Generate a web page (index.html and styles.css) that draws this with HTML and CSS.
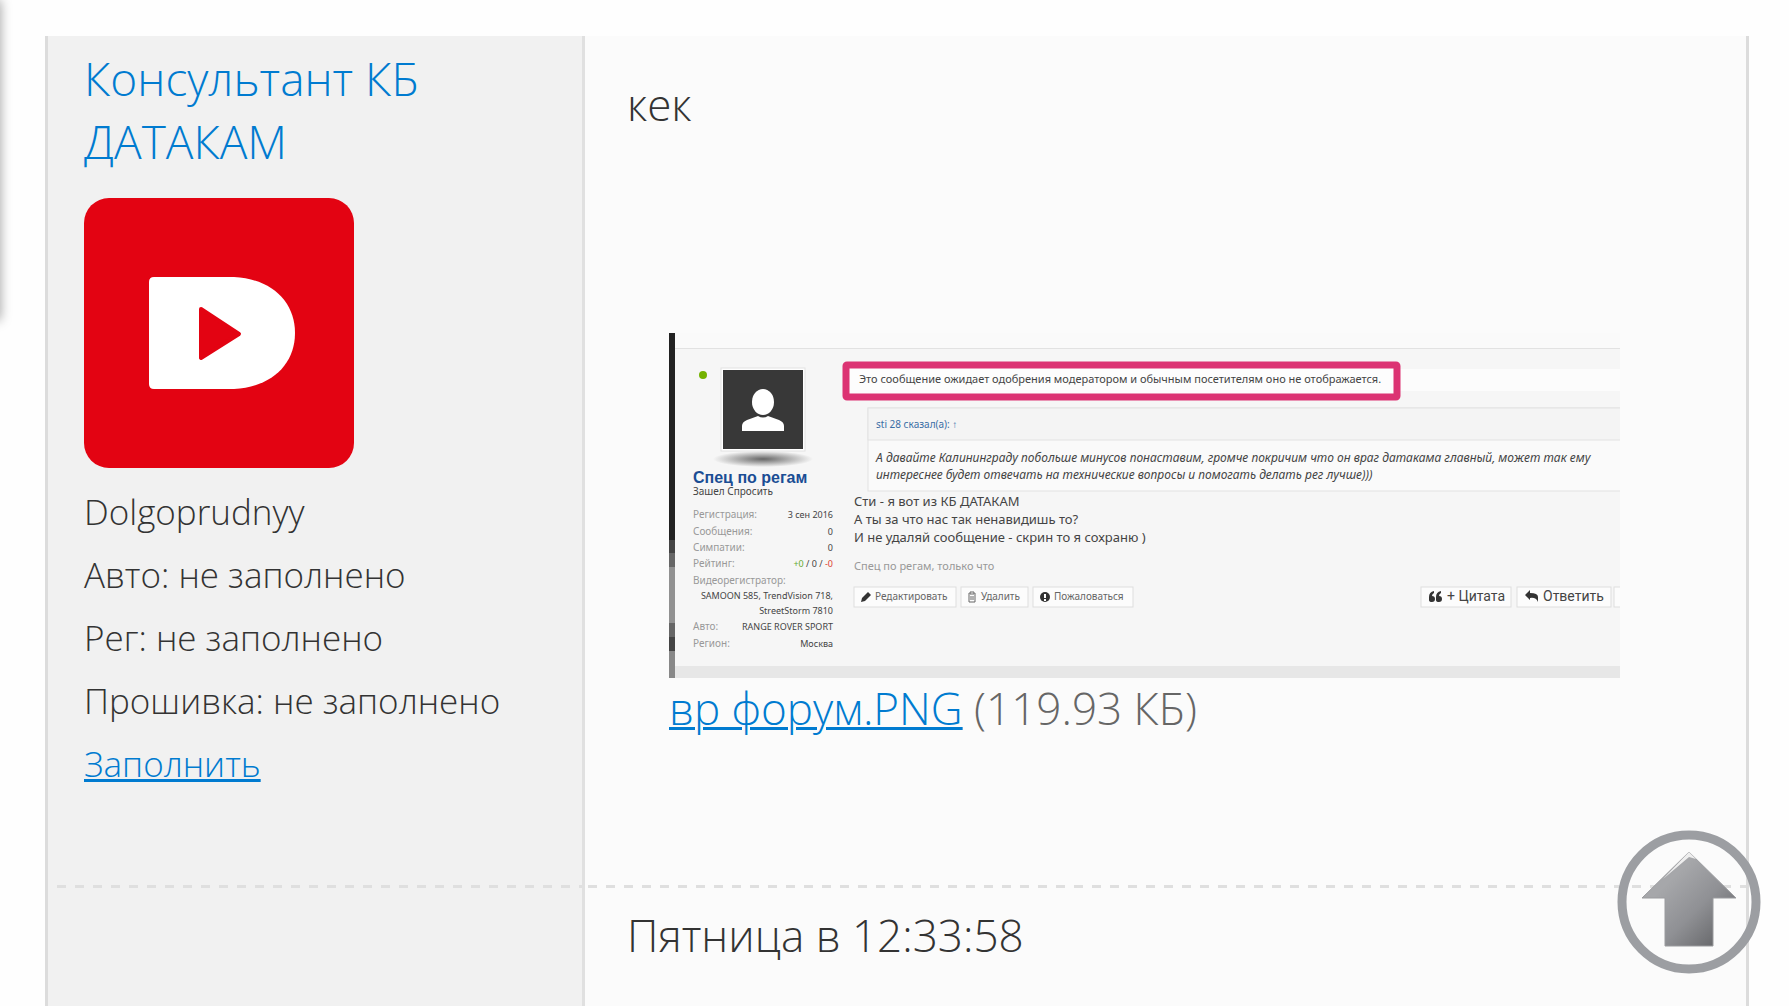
FILE: index.html
```html
<!DOCTYPE html>
<html lang="ru">
<head>
    <meta charset="UTF-8">
    <meta name="viewport" content="width=device-width, initial-scale=1.0">
    <title>Форум ДАТАКАМ</title>
    <link rel="stylesheet" href="styles.css">
</head>
<body>
    <div class="side-shadow"></div>

    <main class="post">
        <div class="post-row">
            <aside class="author">
                <a class="author-name" href="#">Консультант КБ ДАТАКАМ</a>
                <svg class="avatar" viewBox="0 0 270 270" role="img" aria-label="Аватар">
                    <rect width="270" height="270" rx="25" fill="#e30312"/>
                    <path d="M70 79H150C188 81 211 104 211 135C211 166 188 189 150 191H70Q65 191 65 186V84Q65 79 70 79Z" fill="#fff"/>
                    <path d="M117 111L155 136L117 160Z" fill="#e30312" stroke="#e30312" stroke-width="4" stroke-linejoin="round"/>
                </svg>
                <ul class="author-info">
                    <li>Dolgoprudnyy</li>
                    <li>Авто: не заполнено</li>
                    <li>Рег: не заполнено</li>
                    <li>Прошивка: не заполнено</li>
                    <li><a href="#">Заполнить</a></li>
                </ul>
            </aside>
            <article class="message">
                <p class="message-text">кек</p>
                <div class="attachment">
                    <svg class="thumb" viewBox="0 0 951 345" role="img" aria-label="вр форум.PNG">
                        <defs>
                            <radialGradient id="drop">
                                <stop offset="0" stop-color="#666"/>
                                <stop offset="1" stop-color="#f6f6f6"/>
                            </radialGradient>
                        </defs>

                        <!-- background -->
                        <rect width="951" height="345" fill="#f6f6f6"/>
                        <rect width="951" height="16" fill="#fafafa"/>
                        <rect y="15" width="951" height="1" fill="#e2e2e2"/>
                        <rect y="333" width="951" height="12" fill="#e7e7e7"/>
                        <rect x="728" y="36" width="223" height="22" fill="#fcfcfc"/>

                        <!-- left strip -->
                        <rect width="6" height="207" fill="#222"/>
                        <rect y="207" width="6" height="13" fill="#444"/>
                        <rect y="220" width="6" height="14" fill="#666"/>
                        <rect y="234" width="6" height="56" fill="#919191"/>
                        <rect y="290" width="6" height="14" fill="#666"/>
                        <rect y="304" width="6" height="14" fill="#444"/>
                        <rect y="318" width="6" height="27" fill="#888"/>

                        <!-- user card -->
                        <circle cx="34" cy="42" r="4" fill="#74b200"/>
                        <ellipse cx="94" cy="126" rx="50" ry="8" fill="url(#drop)"/>
                        <rect x="52" y="35" width="84" height="83" fill="#fff" stroke="#e2e2e2"/>
                        <rect x="54" y="37" width="80" height="79" fill="#383838"/>
                        <ellipse cx="94" cy="69" rx="11" ry="13" fill="#fff"/>
                        <path d="M73 98V93Q73 89 78 87L89 83Q94 86 99 83L110 87Q115 89 115 93V98Z" fill="#fff"/>
                        <text class="t-user" x="24" y="150">Спец по регам</text>
                        <text class="t-small" x="24" y="162">Зашел Спросить</text>
                        <g class="t-label">
                            <text x="24" y="185">Регистрация:</text>
                            <text x="24" y="202">Сообщения:</text>
                            <text x="24" y="218">Симпатии:</text>
                            <text x="24" y="234">Рейтинг:</text>
                            <text x="24" y="251">Видеорегистратор:</text>
                            <text x="24" y="297">Авто:</text>
                            <text x="24" y="314">Регион:</text>
                        </g>
                        <g class="t-value">
                            <text x="164" y="185">3 сен 2016</text>
                            <text x="164" y="202">0</text>
                            <text x="164" y="218">0</text>
                            <text x="164" y="234"><tspan fill="#6a3">+0</tspan> / 0 / <tspan fill="#d43">-0</tspan></text>
                            <text x="164" y="266">SAMOON 585, TrendVision 718,</text>
                            <text x="164" y="281">StreetStorm 7810</text>
                            <text x="164" y="297">RANGE ROVER SPORT</text>
                            <text x="164" y="314">Москва</text>
                        </g>

                        <!-- moderation notice -->
                        <rect x="177" y="32" width="551" height="32" rx="1" fill="#fdfdfd" stroke="#dc3373" stroke-width="7" stroke-linejoin="round"/>
                        <text class="t-notice" x="190" y="50">Это сообщение ожидает одобрения модератором и обычным посетителям оно не отображается.</text>

                        <!-- quote -->
                        <rect x="199" y="75" width="760" height="83" fill="#fafafa" stroke="#e2e2e2"/>
                        <rect x="199" y="75" width="760" height="32" fill="#f4f4f4" stroke="#e2e2e2"/>
                        <text class="t-said" x="207" y="95">sti 28 сказал(а): ↑</text>
                        <text class="t-quote" x="207" y="129">А давайте Калининграду побольше минусов понаставим, громче покричим что он враг датакама главный, может так ему</text>
                        <text class="t-quote" x="207" y="146">интереснее будет отвечать на технические вопросы и помогать делать рег лучше)))</text>

                        <!-- message -->
                        <g class="t-post">
                            <text x="185" y="173">Сти - я вот из КБ ДАТАКАМ</text>
                            <text x="185" y="191">А ты за что нас так ненавидишь то?</text>
                            <text x="185" y="209">И не удаляй сообщение - скрин то я сохраню )</text>
                        </g>
                        <text class="t-sign" x="185" y="237">Спец по регам, только что</text>

                        <!-- buttons -->
                        <g fill="#fcfcfc" stroke="#dedede">
                            <rect x="185" y="254" width="102" height="20"/>
                            <rect x="292" y="254" width="67" height="20"/>
                            <rect x="364" y="254" width="100" height="20"/>
                            <rect x="752" y="254" width="90" height="20"/>
                            <rect x="848" y="254" width="94" height="20"/>
                            <rect x="945" y="254" width="20" height="20"/>
                        </g>
                        <path d="M192 269L193 265L199 259L202 262L196 268Z" fill="#333"/>
                        <path d="M299 261H307M301 261V259H305V261M300 262V269H306V262M302 263V267M304 263V267" fill="none" stroke="#666"/>
                        <circle cx="376" cy="264" r="5" fill="#333"/>
                        <path d="M376 261V265M376 266V268" stroke="#fff" stroke-width="2"/>
                        <path d="M765 258Q760 259 760 264V267Q760 269 763 269Q766 269 766 266Q766 263 763 263Q763 261 765 260ZM772 258Q767 259 767 264V267Q767 269 770 269Q773 269 773 266Q773 263 770 263Q770 261 772 260Z" fill="#333"/>
                        <path d="M856 262L861 257V260Q869 260 869 264V269Q867 264 861 265V267Z" fill="#333"/>
                        <g class="t-btn">
                            <text x="206" y="267">Редактировать</text>
                            <text x="312" y="267">Удалить</text>
                            <text x="385" y="267">Пожаловаться</text>
                        </g>
                        <g class="t-btn-big">
                            <text x="778" y="268">+ Цитата</text>
                            <text x="874" y="268">Ответить</text>
                        </g>
                    </svg>
                    <p class="file"><a href="#">вр форум.PNG</a> (119.93 КБ)</p>
                </div>
            </article>
        </div>

        <div class="post-row post-footer">
            <div class="author"></div>
            <div class="message">
                <time class="post-date">Пятница в 12:33:58</time>
            </div>
        </div>
    </main>

    <button class="to-top" type="button" aria-label="Наверх">
        <svg viewBox="0 0 144 144">
            <defs>
                <linearGradient id="arrow" x1="0" y1="0" x2="1" y2="1">
                    <stop offset="0.3" stop-color="#a6a7aa"/>
                    <stop offset="0.6" stop-color="#8f9094"/>
                    <stop offset="0.9" stop-color="#66676a"/>
                </linearGradient>
            </defs>
            <circle cx="72" cy="72" r="67" fill="none" stroke="#9c9ea2" stroke-width="9"/>
            <path d="M72 22L119 68H96V116H48V68H25Z" fill="url(#arrow)" stroke="#9a9b9e"/>
            <path d="M72 22L79 29L72 27L46 49Z" fill="#eee"/>
        </svg>
    </button>
</body>
</html>
```
FILE: styles.css
```css
* {
    box-sizing: border-box;
}

body {
    margin: 0;
    padding: 36px 40px 0 45px;
    min-height: 100vh;
    display: flex;
    flex-direction: column;
    background: #fefefe;
    color: #333;
    font-family: "Open Sans", "Noto Sans", sans-serif;
    font-weight: 300;
    font-size: 44px;
    line-height: 63px;
}

a {
    color: #007bd0;
    text-decoration-thickness: 3px;
}

p {
    margin: 0;
}

/* edge of the panel hidden to the left of the page */
.side-shadow {
    position: absolute;
    top: 0;
    left: -10px;
    width: 10px;
    height: 320px;
    box-shadow: 0 0 12px rgba(0, 0, 0, 0.4);
}

.post {
    flex: 1;
    display: flex;
    flex-direction: column;
}

.post-row {
    display: grid;
    grid-template-columns: 540px 1fr;
}

.author {
    padding: 11px 33px 0 36px;
    background: #f1f1f1;
    border-left: 3px solid #dcdcdc;
    border-right: 3px solid #e0e0e0;
}

.message {
    padding: 37px 43px 0 42px;
    background: #fbfbfb;
    border-right: 3px solid #dcdcdc;
}

/* dashed line between the message and its date */
.post-row:first-child .author,
.post-row:first-child .message {
    background-image: repeating-linear-gradient(90deg, transparent 0 9px, #dfdfdf 9px 18px);
    background-size: 100% 3px;
    background-position: 0 100%;
    background-repeat: no-repeat;
}

.post-row:first-child .message {
    padding-bottom: 150px;
    background-image: repeating-linear-gradient(90deg, #dfdfdf 0 9px, transparent 9px 18px);
    background-position: 3px 100%;
}

.author-name {
    display: block;
    font-size: 46px;
    text-decoration: none;
}

.avatar {
    display: block;
    width: 270px;
    height: 270px;
    margin: 25px 0 12px;
}

.author-info {
    margin: 0;
    padding: 0;
    list-style: none;
    font-size: 35px;
}

.attachment {
    margin: 197px 83px 0 42px;
}

.thumb {
    display: block;
    width: 100%;
}

.file {
    color: #666;
    line-height: 60px;
}

.post-footer {
    flex: 1;
}

.post-footer .message {
    padding-top: 16px;
}

.to-top {
    position: fixed;
    right: 28px;
    bottom: 32px;
    width: 144px;
    height: 144px;
    padding: 0;
    border: none;
    background: none;
    cursor: pointer;
}

.to-top svg {
    display: block;
}

/* attachment preview */
.thumb text {
    font-family: "Noto Sans", sans-serif;
    font-weight: 400;
    fill: #444;
}

.thumb .t-user {
    font-family: "Liberation Sans", Arial, sans-serif;
    font-size: 16px;
    font-weight: 700;
    fill: #1a4d94;
}

.thumb .t-small {
    font-size: 10px;
}

.thumb .t-label text {
    font-size: 10px;
    fill: #999;
}

.thumb .t-value text {
    font-size: 9px;
    text-anchor: end;
}

.thumb .t-notice {
    font-size: 11px;
}

.thumb .t-said {
    font-size: 10px;
    fill: #3a6ea5;
}

.thumb .t-quote {
    font-size: 12px;
    font-style: italic;
}

.thumb .t-post text {
    font-size: 13px;
}

.thumb .t-sign {
    font-size: 11px;
    fill: #999;
}

.thumb .t-btn text {
    font-size: 10px;
    fill: #666;
}

.thumb .t-btn-big text {
    font-family: Roboto, sans-serif;
    font-size: 14px;
}
```
